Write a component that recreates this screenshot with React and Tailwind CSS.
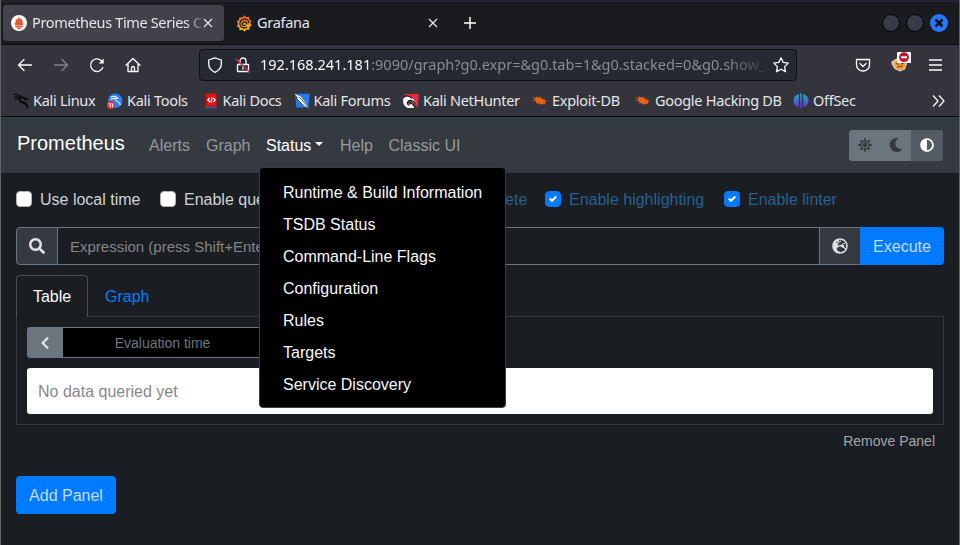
import React from "react";
import { FaSearch, FaChevronLeft, FaMoon, FaAdjust, FaGlobeEurope } from "react-icons/fa";

const noto = "font-['Noto_Sans',sans-serif]";

function Flame() {
  return (
    <svg width="16" height="16" viewBox="0 0 16 16" className="shrink-0">
      <circle cx="8" cy="8" r="8" fill="#fff" />
      <path d="M8 1.500c.8 1.500.4 2.100 1 3 .7-.5.6-1.200.8-1.600 1.500 2.200 2.400 3.500 1.800 5.600l.9-.4c0 1-.4 1.600-1 2.200H4.500c-.7-.6-1-1.200-1-2.200l1 .4C4 6.500 5 5.400 5.800 3.600c.4.600.4 1 .6 1.600C7.400 4 7.200 2.700 8 1.500zM4.200 10.800h7.600v1.500H4.200zM5.500 12.700h5c-.5 1.800-4.500 1.800-5 0z" fill="#e6522c" />
    </svg>
  );
}

function GrafanaLogo() {
  return (
    <svg width="16" height="17" viewBox="0 0 16 17" className="shrink-0">
      <defs>
        <linearGradient id="graf" x1="0" y1="0" x2="0" y2="1">
          <stop offset="0" stopColor="#f05a28" />
          <stop offset="1" stopColor="#fbca0a" />
        </linearGradient>
      </defs>
      <path d="M8.500.3l1.700 1.900 2.900-.4.200 2.600 2.300 1.600-1.300 2.200 1.400 2.500-2.200 1.300-.3 2.700-2.700-.2-2 2-2-1.700-2.900.5-.4-2.600-2.400-1.500 1.300-2.300L.8 6.400 3 5.100l.3-2.800 2.900.1z" fill="url(#graf)" />
      <path d="M13 8.200C12.600 5.500 10.600 4.200 8.300 4.200c-2.600 0-4.400 2-4.400 4.400 0 2.600 2 4.400 4.400 4.400 1.200 0 2-.3 2.800-1M11 9.300c0-1.400-1.100-2.400-2.500-2.400-1.300 0-2.200 1-2.200 2.100s.8 1.700 1.800 1.700c.8 0 1.100-.5 1.100-1" stroke="#1c1b22" strokeWidth="1.300" fill="none" />
    </svg>
  );
}

function Close() {
  return (
    <svg width="10" height="10" viewBox="0 0 10 10" className="shrink-0" stroke="#e8e8ea" strokeWidth="1.200" fill="none">
      <path d="M1 1l8 8M9 1L1 9" />
    </svg>
  );
}

function Tool({ children }) {
  return (
    <svg width="16" height="16" viewBox="0 0 16 16" className="shrink-0" fill="none" stroke="#fbfbfe" strokeWidth="1.300" strokeLinecap="round" strokeLinejoin="round">
      {children}
    </svg>
  );
}

function KaliIcon() {
  return (
    <svg width="16" height="16" viewBox="0 0 16 16" className="shrink-0" fill="none" stroke="#08080a" strokeLinecap="round">
      <path d="M.5 1.300c4 0 6.500.9 8.500 3M1.500 4.200c3-.8 5-.5 7 .3M2.500 6.500c2-1 3.500-1.300 5.500-.8" strokeWidth="1.100" />
      <path d="M8.500 4.500C5 6 6.500 9.300 9.500 9.200c3 0 4.400 1.500 5 5.300M8.500 4.500c2-.4 3.300 0 4.300 1.300l1.700.4M11.500 5l1 1.500" strokeWidth="1.700" />
      <path d="M9.500 9.200c2.500.8 4 2 5 4.500" strokeWidth="2" />
    </svg>
  );
}

function ToolsIcon() {
  return (
    <svg width="16" height="16" viewBox="0 0 16 16" className="shrink-0">
      <circle cx="8.200" cy="7.800" r="7.300" fill="#2b7df5" />
      <path d="M3.500 4c3.500-1.200 6-.4 7.500 1.500-3-.4-3.500 1.800-1.500 2.500 2.300.6 3.500 1.500 3.800 4M3.500 6.800c1.500-1 3-1.500 5-1.300" stroke="#dcebff" strokeWidth="1.200" fill="none" />
      <circle cx="3.900" cy="12" r="3.900" fill="#ed333b" />
      <path d="M1.700 10.700h1.500v3.500M4.300 10.700h1.300v3.500" stroke="#fff" strokeWidth="1" fill="none" />
    </svg>
  );
}

function DocsIcon() {
  return (
    <svg width="16" height="16" viewBox="0 0 16 16" className="shrink-0">
      <path d="M1.800.5h11.800v13.300H1.800z" fill="#e01218" />
      <path d="M1.800.5h1.700v13.300H1.800z" fill="#a90d12" />
      <path d="M1.800 13.800h11.800v1.700H1.800z" fill="#2c5795" />
      <path d="M6.700 5L4.800 7l1.900 2M10.300 5l1.900 2-1.900 2M9.200 4.500L7.800 9.500" stroke="#fff" strokeWidth="1.200" fill="none" />
    </svg>
  );
}

function ForumsIcon() {
  return (
    <svg width="16" height="16" viewBox="0 0 16 16" className="shrink-0">
      <path d="M1 .7h14.700l-1.200 13.800H2.500z" fill="#267df0" />
      <path d="M.3 1l6.400 2.500 4 5 4.300 6.500-6-3-4-3.700z" fill="#fff" />
      <path d="M.3 1.500l3 3L2 5l3.500 3.800 4 3.500M5 4l4 4 5.500 6.500" stroke="#202634" strokeWidth=".8" fill="none" />
    </svg>
  );
}

function NetHunterIcon() {
  return (
    <svg width="16" height="16" viewBox="0 0 16 16" className="shrink-0">
      <path d="M1 1h14.700l-.7 13.500L7 8z" fill="#ee263b" />
      <path d="M.5 5.500C3 2.200 7 2.700 9.300 5l4.700 6-3-1C9 6.500 5 7.500 5 9.500S7 12 8.500 11l3 4H5C0 13-.5 8 .5 5.500z" fill="#fff" />
      <path d="M1 3.500c3.500-1.500 6-.5 8 2M13 11C10 7 6 6 4.500 9.200c-.5 1.500.5 3 2 3" stroke="#191c24" strokeWidth="1.300" fill="none" />
    </svg>
  );
}

function BugIcon() {
  return (
    <svg width="16" height="16" viewBox="0 0 16 16" className="shrink-0">
      <path d="M2.500 5.300C4.500 3.800 8 4 10.500 6.200c2 .3 3.200 1.500 2.800 3.300-1.500 2-5.700 2.200-8.200.2C3.500 8.500 2.500 7 2.500 5.300z" fill="#ec6110" />
      <path d="M3.500 5.500L1 4.500M5 5l-.7-1.500M8 5l.7-1.200M11 6.500l1-1M12 8l2.500-.2M12 10l1.500 1M8.500 10.500l.7 1.300M5.500 9.500l-1 1.200M3.500 7.500L1 7.800" stroke="#ec6110" strokeWidth=".8" strokeLinecap="round" />
    </svg>
  );
}

function OffSecIcon() {
  return (
    <svg width="16" height="16" viewBox="0 0 16 16" className="shrink-0">
      <defs>
        <linearGradient id="off" x1="0" y1="0" x2="0" y2="1">
          <stop offset="0" stopColor="#18b8c9" />
          <stop offset="1" stopColor="#6a22d9" />
        </linearGradient>
      </defs>
      <path d="M5.700 1v13.500C-1.300 12-1.300 3.500 5.700 1zM7.200.5h1.600v15H7.200zM10.300 1v13.500C17.300 12 17.300 3.500 10.300 1z" fill="url(#off)" />
    </svg>
  );
}

function CookieIcon() {
  return (
    <svg width="21" height="22" viewBox="0 0 21 22" className="shrink-0">
      <path d="M1.500 10.500l5-3 8 1 2.500 4.500-2 5.500-5 2-5.500-2.500-3-5z" fill="#d9cbbb" />
      <path d="M3.500 11l4-1.500 8 1-.5 6.500-4.500 2.500-5-2.500z" fill="#f69a32" />
      <path d="M6 12.500l3 1M11 13l3-1M7 16.200l6-1.500" stroke="#6f4728" strokeWidth="1" fill="none" />
      <path d="M7 1h14v11H7z" fill="#fff" />
      <circle cx="14" cy="6.200" r="4.900" fill="#c4122f" />
      <path d="M11 5.300h6v2h-6z" fill="#fff" />
    </svg>
  );
}

function SunIcon() {
  return (
    <svg width="14" height="14" viewBox="0 0 14 14" fill="none" stroke="#343a40">
      <circle cx="7" cy="7" r="2.400" fill="#343a40" stroke="none" />
      <circle cx="7" cy="7" r="4" strokeWidth="1.300" />
      <path d="M7 .3v2.500M7 11.200v2.500M.3 7h2.500M11.200 7h2.500M2.300 2.300L4 4M10 10l1.700 1.700M11.700 2.300L10 4M4 10l-1.700 1.700" strokeWidth="1.800" />
    </svg>
  );
}

const bookmarks = [
  [KaliIcon, "Kali Linux", "w-[94px]"],
  [ToolsIcon, "Kali Tools", "w-[95.500px]"],
  [DocsIcon, "Kali Docs", "w-[91px]"],
  [ForumsIcon, "Kali Forums", "w-[109.500px]"],
  [NetHunterIcon, "Kali NetHunter", "w-[129px]"],
  [BugIcon, "Exploit-DB", "w-[103px]"],
  [BugIcon, "Google Hacking DB", "w-[158px]"],
  [OffSecIcon, "OffSec", "w-[70px]"],
];

function Checkbox({ label, checked, cls }) {
  return (
    <div className={`flex h-6 shrink-0 items-center gap-2 ${cls}`}>
      <span className={`flex size-4 items-center justify-center rounded border ${checked ? "border-[#007bff] bg-[#007bff]" : "border-[#adb5bd] bg-white"}`}>
        {checked && (
          <svg width="8" height="8" viewBox="0 0 8 8">
            <path fill="#fff" d="M6.564.75l-3.590 3.612-1.538-1.550L0 4.260l2.974 2.990L8 2.193z" />
          </svg>
        )}
      </span>
      <span className={`pt-px whitespace-nowrap ${checked ? "text-[#286090]" : "text-[#cfd3d7]"}`}>{label}</span>
    </div>
  );
}

export default function App() {
  return (
    <div className="relative flex h-[545px] w-[960px] flex-col overflow-hidden border-x border-[#5d6064] bg-[#1a1d21] font-['Liberation_Sans',sans-serif] text-base text-[#dee2e6]">
      <div className={`flex h-[45px] shrink-0 items-center border-t-2 border-b border-t-[#23252e] border-b-[#0c0c0d] bg-[#1a1b1f] pl-[2px] text-[14.500px] text-[#e6e6e9] ${noto}`}>
        <div className="flex h-9 w-[221px] items-center rounded bg-[#42434a] pl-2">
          <Flame />
          <span className="ml-[5px] w-[170px] tracking-[-0.35px] whitespace-nowrap [mask-image:linear-gradient(to_right,black_90%,transparent_103%)]">Prometheus Time Series C</span>
          <span className="ml-px"><Close /></span>
        </div>
        <div className="flex h-9 w-[214px] items-center pl-3">
          <GrafanaLogo />
          <span className="ml-[5px] grow tracking-[-0.3px]">Grafana</span>
          <Close />
        </div>
        <svg width="14" height="14" viewBox="0 0 14 14" className="ml-[25px]" stroke="#fff" strokeWidth="1.500"><path d="M7 1v12M1 7h12" /></svg>
        <div className="ml-auto flex items-center gap-[6px] pr-[11px]">
          <span className="size-[18px] rounded-full border border-black bg-[#373c49]" />
          <span className="size-[18px] rounded-full border border-black bg-[#373c49]" />
          <svg width="18" height="18" viewBox="0 0 18 18"><circle cx="9" cy="9" r="9" fill="#2777ff" /><path d="M5.500 5.500l7 7M12.500 5.500l-7 7" stroke="#07101f" strokeWidth="2.500" /></svg>
        </div>
      </div>

      <div className={`flex h-[41px] shrink-0 items-center bg-[#33343c] pb-px pl-4 text-[14.500px] ${noto}`}>
        <Tool><path d="M14.500 8h-13M7 2.500L1.500 8 7 13.500" /></Tool>
        <span className="ml-5 flex opacity-40"><Tool><path d="M1.500 8h13M9 2.500L14.500 8 9 13.500" /></Tool></span>
        <span className="ml-5 flex"><Tool><path d="M13.800 10.500A6.300 6.300 0 1 1 12.500 3.800" /><path d="M14.700 1.500v5h-5z" fill="#fbfbfe" stroke="none" /></Tool></span>
        <span className="ml-[19.500px] flex"><Tool><path d="M1 8.300L8 1.500l7 6.800M3 7v7.500h10V7M6.500 14.500V11a1.500 1.500 0 0 1 3 0v3.500" /></Tool></span>
        <div className="ml-[58.500px] flex h-8 w-[598px] items-center rounded border border-[#0f1014] bg-[#262832] pl-[7px]">
          <Tool><path d="M8 .8L14.300 3v4c0 4-2.500 6.500-6.300 8.300C4.200 13.500 1.700 11 1.700 7V3z" /></Tool>
          <span className="ml-3 flex"><Tool><path d="M2.500 7.500h11v7h-11zM5 7.500V4a3 3 0 0 1 6 0v3.500M8 10v2" /><path d="M1 2l13.500 13" stroke="#e22850" strokeWidth="1.500" /></Tool></span>
          <span className="ml-[9px] w-[505px] whitespace-nowrap text-[#8b8c94] [mask-image:linear-gradient(to_right,black_92%,transparent_101%)]">
            <span className="text-[#fbfbfe]">192.168.241.181</span>:9090/graph?g0.expr=&amp;g0.tab=1&amp;g0.stacked=0&amp;g0.show_
          </span>
          <span className="ml-[8px] flex"><Tool><path d="M8 .8l2.200 4.600 5 .7-3.600 3.500.9 5L8 12.200l-4.500 2.400.9-5L.8 6.100l5-.7z" /></Tool></span>
        </div>
        <div className="ml-auto flex items-center pr-[17px]">
          <Tool><path d="M1.500 2.500h13V8a6.500 6 0 0 1-13 0zM5 6.500l3 3 3-3" /></Tool>
          <span className="mt-[-6px] ml-[19px]"><CookieIcon /></span>
          <svg width="13" height="12" viewBox="0 0 13 12" className="ml-[18px]" stroke="#fbfbfe" strokeWidth="1.300"><path d="M0 1h13M0 6h13M0 11h13" /></svg>
        </div>
      </div>

      <div className={`flex h-[31px] shrink-0 items-center border-b border-[#0c0c0d] bg-[#33343c] pb-px pl-3 text-[14.500px] text-[#e6e6e9] ${noto}`}>
        {bookmarks.map(([Icon, name, w]) => (
          <div key={name} className={`flex shrink-0 items-center gap-1 whitespace-nowrap ${w}`}>
            <Icon />
            <span className="tracking-[-0.29px]">{name}</span>
          </div>
        ))}
        <svg width="13" height="12" viewBox="0 0 13 12" className="mr-[14px] ml-auto" fill="none" stroke="#fbfbfe" strokeWidth="1.300"><path d="M1 0.500L6 6l-5 5.500M7 .5L12 6l-5 5.500" /></svg>
      </div>

      <nav className="relative flex h-14 shrink-0 items-center bg-[#343a40] pl-[16px]">
        <span className="mt-[-5px] w-[132px] text-[20px] leading-[30px] text-white">Prometheus</span>
        <span className="w-[57px] pt-[2px] text-[#96999c]">Alerts</span>
        <span className="w-[60px] pt-[2px] text-[#96999c]">Graph</span>
        <span className="flex w-[74px] items-center pt-[2px] text-white">Status<span className="mt-[-4px] ml-1 border-x-[4.800px] border-t-[4.800px] border-x-transparent border-t-white" /></span>
        <span className="w-[48.500px] pt-[2px] text-[#96999c]">Help</span>
        <span className="pt-[2px] text-[#96999c]">Classic UI</span>
        <div className="mr-4 ml-auto flex h-[31px] w-[94px] overflow-hidden rounded-[3px] bg-[#6c757d] text-[#343a40]">
          <span className="flex w-8 items-center justify-center"><SunIcon /></span>
          <span className="flex w-[30px] items-center justify-center"><FaMoon size={14} /></span>
          <span className="flex w-8 items-center justify-center bg-[#545b62] text-white"><FaAdjust size={14} /></span>
        </div>
        <div className="absolute top-[50px] left-[258px] z-10 flex h-[241px] w-[247px] flex-col rounded border border-[#3a3d40] bg-black pt-[9px] pl-[23px] leading-8 text-[#f8f9fa]">
          <span>Runtime &amp; Build Information</span>
          <span>TSDB Status</span>
          <span>Command-Line Flags</span>
          <span>Configuration</span>
          <span>Rules</span>
          <span>Targets</span>
          <span>Service Discovery</span>
        </div>
      </nav>

      <main className="flex grow flex-col px-[15px] pt-[14px]">
        <div className="flex">
          <Checkbox label="Use local time" cls="w-[144px]" />
          <Checkbox label="Enable query history" cls="w-[193px]" />
          <Checkbox label="Enable autocomplete" checked cls="w-[192px]" />
          <Checkbox label="Enable highlighting" checked cls="w-[179px]" />
          <Checkbox label="Enable linter" checked cls="" />
        </div>
        <div className="mt-4 flex h-[38px] shrink-0">
          <span className="flex w-[42px] items-center justify-center rounded-l border border-[#6c757d] bg-[#343a40]"><FaSearch size={16} /></span>
          <span className="flex grow items-center border-y border-[#6c757d] pt-[2px] pl-3 text-[15px] text-[#858585]">Expression (press Shift+Enter for newlines)</span>
          <span className="flex w-[41px] items-center justify-center border border-r-0 border-[#6c757d] bg-[#343a40]"><FaGlobeEurope size={16} /></span>
          <span className="flex w-[84px] items-center justify-center rounded-r bg-[#007bff] pt-[2px] text-[#c6dcf3]">Execute</span>
        </div>
        <div className="mt-[10px] flex h-[42px] shrink-0">
          <span className="flex w-[72px] items-center justify-center rounded-t border border-b-0 border-[#495057] text-[#f8f9fa]">Table</span>
          <span className="flex grow items-center border-b border-[#343a40] pt-[2px] pl-[17px] text-[#007bff]">Graph</span>
        </div>
        <div className="flex h-[108px] shrink-0 flex-col border border-t-0 border-[#343a40] px-[10px] pt-[10px]">
          <div className="flex h-[31px] w-[270px]">
            <span className="flex w-9 items-center justify-center rounded-l-[3px] bg-[#6c757d]"><FaChevronLeft size={14} /></span>
            <span className="flex w-[199px] items-center justify-center border-y border-[#6c757d] bg-black pt-[2px] text-[14px] text-[#6c757d]">Evaluation time</span>
          </div>
          <div className="mt-[10px] flex h-[46px] items-center rounded-[3px] bg-white pt-[2px] pl-[11px] text-[#888]">No data queried yet</div>
        </div>
        <span className="mt-[6px] mr-[9px] self-end text-[14px] leading-[21px] text-[#a5a7a9]">Remove Panel</span>
        <span className="mt-6 flex h-[38px] w-[100px] shrink-0 items-center justify-center rounded bg-[#007bff] pt-[2px] text-[#c6dcf3]">Add Panel</span>
      </main>
    </div>
  );
}
